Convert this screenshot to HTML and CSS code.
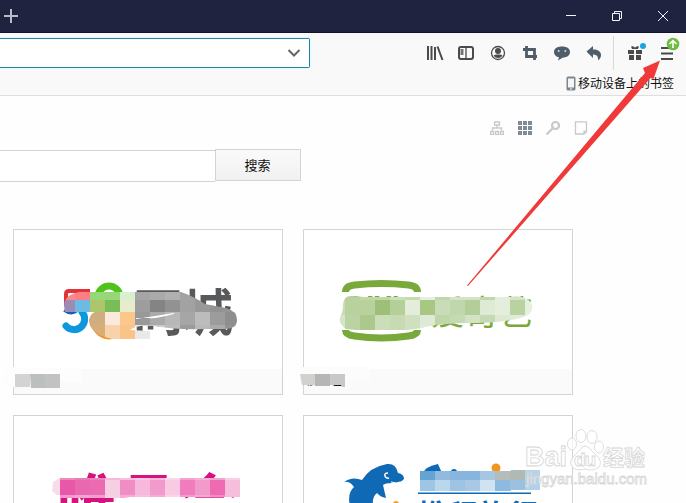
FILE: index.html
```html
<!doctype html>
<html lang="zh">

<head>
    <meta charset="utf-8">
    <title>新标签页</title>
    <link rel="stylesheet" href="styles.css">
</head>

<body>

<header class="titlebar">
    <svg class="new-tab" width="14" height="14" viewBox="0 0 14 14"><path d="M7 0v14M0 7h14"/></svg>
    <div class="window-buttons">
        <svg width="46" height="32" viewBox="0 0 46 32"><path d="M18 15.500h10"/></svg>
        <svg width="46" height="32" viewBox="0 0 46 32"><path d="M18.500 13.500h7v7h-7zM20.500 13.500v-2h7v7h-2"/></svg>
        <svg width="46" height="32" viewBox="0 0 46 32"><path d="M18 11l10 10M28 11L18 21"/></svg>
    </div>
</header>

<div class="toolbar">
    <div class="nav">
        <div class="url">
            <svg width="14" height="10" viewBox="0 0 14 10"><path d="M1.500 2L7 7.500 12.500 2"/></svg>
        </div>
        <div class="buttons">
            <!-- library -->
            <svg viewBox="0 0 32 32"><path class="line" d="M10 9v14M13.500 9v14M17 10v13M19.500 9.500l5 13.500"/></svg>
            <!-- sidebar -->
            <svg viewBox="0 0 32 32"><rect class="line" x="9" y="10" width="14" height="12" rx="2"/><path class="line thin" d="M16 10v12M10.500 13h3M10.500 15h3M10.500 17h3"/></svg>
            <!-- account -->
            <svg viewBox="0 0 32 32"><circle class="line thin" cx="16" cy="16" r="6.500"/><circle class="fill" cx="16" cy="14" r="3"/><path class="fill" d="M11.500 18.500q2-1 3-1h3q2 0 3 1-1.500 2.500-4.500 2.500t-4.500-2.500z"/></svg>
            <!-- screenshot -->
            <svg viewBox="0 0 32 32"><path class="slate-line" d="M9 12.500h11.500V23M12.500 9v10.500H23"/></svg>
            <!-- chat -->
            <svg viewBox="0 0 32 32"><path class="slate" d="M16 9.500c5 0 8 2.200 8 5.500s-3 5.500-7 5.500l-5 3 1-3.200C10 19.800 8 17.700 8 15c0-3.300 3-5.500 8-5.500z"/><circle cx="12.700" cy="14" r="1" fill="#d5dade"/><circle cx="19.300" cy="14" r="1" fill="#d5dade"/></svg>
            <!-- undo -->
            <svg viewBox="0 0 32 32"><path class="slate" d="M8.500 14.500l6.500-5.500v3.500c5 0 8 2 8 5.500 0 2-1 4-3 5.500.7-4-1.500-6-5-6V21z"/></svg>
            <i class="separator"></i>
            <!-- gift -->
            <svg viewBox="0 0 32 32"><path class="fill" d="M9 13h6v4H9zM17 13h6v4h-6zM10 18h5v5h-5zM17 18h5v5h-5zM12 9.500q3-1 4 1.200 1-2.200 4-1.200l-1 2.500h-6z"/><circle cx="24" cy="9" r="3" fill="#1ba5e0"/></svg>
            <!-- menu -->
            <svg viewBox="0 0 32 32"><path class="line" d="M10 11h12M10 16.500h12M10 22h12"/><circle cx="22" cy="7" r="6.300" fill="#6ebd43"/><path d="M22 11V4M18.500 7L22 3.600 25.500 7" fill="none" stroke="#fff" stroke-width="1.600"/></svg>
        </div>
    </div>
    <div class="bookmarks">
        <svg width="10" height="15" viewBox="0 0 10 15"><rect x=".5" y=".5" width="9" height="14" rx="1.500" fill="#7d858d"/><path d="M2 2.500h6v9H2z" fill="#f4f5f6"/><path d="M4 13h2" stroke="#fff"/></svg>
        <span>移动设备上的书签</span>
    </div>
</div>

<main>
    <div class="views">
        <svg viewBox="0 0 14 14"><path d="M4.500 1h5v3h-5zM7 4v3M2.500 9.500V7h9v2.500M.5 10.500h3v3h-3zM5.500 10.500h3v3h-3zM10.500 10.500h3v3h-3z"/></svg>
        <svg class="active" viewBox="0 0 14 14"><path d="M0 2h14M0 7h14M0 12h14"/></svg>
        <svg class="search-icon" viewBox="0 0 14 14"><circle cx="9.500" cy="4.500" r="3.500"/><path d="M7 7l-6.500 6.500"/></svg>
        <svg viewBox="0 0 14 14"><path d="M1.500.8h11v9.700l-2.500 2.500H1.500zM12.500 10.500H10V13"/></svg>
    </div>

    <form class="search">
        <input type="text">
        <button type="button">搜索</button>
    </form>

    <div class="tiles">
        <div class="tile">
            <svg class="logo" viewBox="14 230 268 139">
                <path d="M90 291H69q-3 0-3 3v12" fill="none" stroke="#e23237" stroke-width="4"/>
                <path d="M65 309q7 5 13-1" fill="none" stroke="#155ebd" stroke-width="6"/>
                <path d="M82 312a10.500 10.500 0 1 1-16 14" fill="none" stroke="#0d98dc" stroke-width="7" stroke-linecap="round"/>
                <circle cx="109" cy="297" r="11" fill="none" stroke="#4fc319" stroke-width="7"/>
                <circle cx="109" cy="322" r="14" fill="none" stroke="#f39321" stroke-width="7"/>
                <text class="name-58" x="133" y="331">同城</text>
                <clipPath id="clip-58"><path d="M64 306q0-11 15-14h102q12 4 24 12l21 4q11 3 11 12t-13 9h-21q-25 1-48-3-18-2-25 4l20 1v8h-38q-23-5-23-19 2-8 8-8H65z"/></clipPath>
                <g class="mosaic" data-mosaic="58" clip-path="url(#clip-58)"></g>
                <path d="M136 319l38-6v1q-18 5-26 4h-12z" fill="#fff"/>
            </svg>
            <div class="caption"></div>
            <svg class="cover" viewBox="0 0 84 27">
                <path d="M10 0h60q9 0 12 4v11H15v5h-3Q2 18 2 12T10 0z" fill="#fdfdfd"/>
                <path d="M15 7h15v13H15z" fill="#d5d2d2"/><path d="M30 7h15v14H31z" fill="#bbbfc0"/><path d="M45 7h15v14H45z" fill="#c2c2c2"/>
            </svg>
        </div>
        <div class="tile">
            <svg class="logo" viewBox="304 230 268 139">
                <path d="M345.500 292q0-6 9-7 27-3 54 0 9 1 9 7M345.500 330q0 5 9 6 27 4 54 0 9-1 9-6" fill="none" stroke="#79a83b" stroke-width="7"/>
                <text class="qiyi" x="344" y="317">QIYI</text>
                <text class="name-qiyi" x="431" y="325">爱奇艺</text>
                <clipPath id="clip-qiyi"><path d="M343 308q-1-12 8-12l14 1h145q15-3 22 7 2 10-9 13-17 6-59 6-30 1-42 5-35 6-76 1-10-7-4-16z"/></clipPath>
                <g class="mosaic" data-mosaic="qiyi" clip-path="url(#clip-qiyi)"></g>
            </svg>
            <div class="caption">爱奇艺</div>
            <svg class="cover" viewBox="0 0 84 27">
                <path d="M10 0h70v14H10z" fill="#fcfcfc"/>
                <path d="M10 7h15v11H12z" fill="#d1d1d0"/><path d="M25 7h15v12H25z" fill="#b6b6b5"/><path d="M40 7h15v13h-3l-1-2H40z" fill="#c6c8c9"/>
            </svg>
        </div>
        <div class="tile">
            <svg class="logo" viewBox="14 416 268 139">
                <text class="vip" x="57" y="525">唯品会</text>
                <clipPath id="clip-vip"><path d="M60 478h180v19H130l-5 1H60l-8-7 1-9z"/></clipPath>
                <g class="mosaic" data-mosaic="vip" clip-path="url(#clip-vip)"></g>
            </svg>
            <div class="caption"></div>
        </div>
        <div class="tile">
            <svg class="logo" viewBox="304 416 268 139">
                <path d="M344 482q8-6 18-2 8-13 25-16 9-1 11 9 6 1 6 6-3 4-12 4-7 0-9 2l3 13q-6-1-9-5-5 4-4 12l-23 1q-3-13 4-19-4-6-10-5z" fill="#0f69b5"/>
                <path d="M388 473q-4 0-3 3t4 2" fill="none" stroke="#fff" stroke-width="1.500"/>
                <path d="M391 482q6 2 9 0" fill="none" stroke="#fff"/>
                <circle cx="396" cy="504" r="3" fill="#f3a12b"/>
                <path d="M422 474q4-8 16-10l4 9v3h-20z" fill="#0f69b5"/>
                <circle cx="454" cy="472" r="3" fill="#0f69b5"/>
                <circle cx="496" cy="468" r="4.500" fill="#f0961e"/>
                <path d="M418 493.300h113" stroke="#0f69b5" stroke-width="1.500"/>
                <text class="ctrip" x="418" y="526">携程旅行</text>
                <clipPath id="clip-ctrip"><path d="M420 471h91v-1h29v20h-29v1h-91z"/></clipPath>
                <g class="mosaic" data-mosaic="ctrip" clip-path="url(#clip-ctrip)"></g>
            </svg>
            <div class="caption"></div>
        </div>
    </div>
</main>

<svg class="arrow" width="200" height="230" viewBox="464 58 200 230">
    <path d="M467 285.500L645 73l-2-5 17-7.500-6.500 18.500-3-1L468 286z" fill="#f03a3a"/>
</svg>

<div class="watermark">
    <svg width="135" height="68" viewBox="524 424 135 68">
        <g class="paw">
            <ellipse cx="572" cy="444" rx="4.500" ry="6"/>
            <ellipse cx="581" cy="436" rx="5" ry="6.500"/>
            <ellipse cx="592" cy="437" rx="5" ry="6.500"/>
            <ellipse cx="599" cy="447" rx="4.500" ry="6"/>
            <path d="M585 446q4 0 7 5l7 7q4 8-3 11-5 2-11 0-8 2-12-1-5-5 0-11l7-7q2-4 5-4z"/>
        </g>
        <text x="525" y="466" class="bai" textLength="42">Bai</text>
        <text x="574" y="466" class="du" textLength="22">du</text>
        <text x="603" y="465" class="jingyan">经验</text>
        <text x="526" y="484" class="site" textLength="121">jingyan.baidu.com</text>
    </svg>
</div>

<script>

    // rows of 15px cells, first value is the left edge, second the top
    let mosaics = {
        "58": [
            [60, 285, "#f7888b #fb7e84 #98d777 #98d777 #d9f0d0 #a5a5a5 #aaa #b0b0b0 #a2a2a2 #9b9b9b #999 #999"],
            [60, 300, "#9c8cb4 #6bbbe6 #adc66c #79bd59 #e9eccb #9d9d9d #858383 #929292 #a2a2a2 #999 #929292 #959595"],
            [60, 312, "#d0ad80 #d0ad80 #d0ad80 #fbeadb #fbc78b #999 #aaa #b8b8b8 #a6a6a6 #bcbcbc #9c9c9c #8e8e8e #cbcbcb"],
            [90, 325, "#d7ad78 #f7d2aa #f9c488 #e9e9e9 #ccc #bbb #9b9b9b #b8b8b8 #aaa #929292 #cbcbcb"]
        ],
        "qiyi": [
            [330, 285, "#c8dbb6 #b9d19d #c1d7a9 #c1d7a9 #cbdfb8 #c6dab2 #e6efdf #c1d7ae #d4e3c8 #d3e3c5 #c1d7ae #e5eedc #d5e4c7 #e7efdf"],
            [330, 300, "#c8dbb6 #b9d19d #b9d19d #9dbf77 #b4cf98 #e3edda #a8c783 #cadcb7 #c0d6ab #b3ce98 #dfead4 #e5eedc #b9d29f #e7efdf"],
            [330, 315, "#d6e4ca #bad3a1 #abc98d #cbddb9 #c7dab3 #cfe0bf #dfead6 #bed6a8 #c5dab3 #d4e3c8 #c5dab3 #dce8d2 #e0ebd8 #e7efdf"]
        ],
        "vip": [
            [45, 465, "#f7d5e6 #eb8abd #e87bb6 #e983b9 #f3bada #f5bfdb #f7c9e2 #f3bada #f9d6e8 #f1a3cd #f3b3d5 #f0a3cb #f8cfe4"],
            [45, 480, "#f9dcea #e857a8 #e968af #ea6bb1 #f7cfe3 #f08dc5 #f6b8dc #f19acb #f9cae4 #ef7dbd #f19acb #ee6ab2 #f6bddd"],
            [45, 495, "#fff #f19acb #f2a5d0 #f1a0ce #f7d0e4 #f4add5 #f7c2df #f3aed5 #f8d6e8 #f29bcc #f3aad2 #f08dc4 #f6bddd"]
        ],
        "ctrip": [
            [420, 465, "#65a3d3 #91bade #87b5dd #87b5dd #a6c7e1 #b5bdbb #b1b9b5 #b6d4e8 #dbe9f4"],
            [420, 480, "#9ec5e4 #bad7ed #9fc3e3 #a8c8e6 #cfe3f3 #8dbae0 #9bc1df #b2d1e9 #d6e6f2"]
        ]
    };

    for (let name in mosaics) {
        let group = document.querySelector(`[data-mosaic="${name}"]`);
        for (let [left, top, colors] of mosaics[name]) {
            colors.split(" ").forEach((color, i) => {
                let cell = document.createElementNS("http://www.w3.org/2000/svg", "rect");
                cell.setAttribute("x", left + i * 15);
                cell.setAttribute("y", top);
                cell.setAttribute("width", 15);
                cell.setAttribute("height", 15);
                cell.setAttribute("fill", color);
                group.appendChild(cell);
            });
        }
    }

</script>

</body>

</html>
```

FILE: styles.css
```css
html,
body {
    height: 100%;
    margin: 0;
    overflow: hidden;
}

body {
    position: relative;
    background: #fefefe;
    color: #111;
    font: 12px "Noto Sans CJK SC", sans-serif;
}

svg {
    display: block;
    flex: none;
}

.titlebar {
    display: flex;
    justify-content: space-between;
    box-sizing: border-box;
    height: 33px;
    padding-left: 4px;
    border-bottom: 1px solid #11142b;
    background: #202340;
}

.new-tab {
    margin-top: 9px;
    stroke: #b9bacb;
    stroke-width: 2;
}

.window-buttons {
    display: flex;
    fill: none;
    stroke: #f4f4f8;
}

.toolbar {
    box-sizing: border-box;
    height: 63px;
    border-bottom: 1px solid #dedede;
    background: #f9f9f9;
}

.nav {
    display: flex;
    justify-content: space-between;
    height: 39px;
    padding: 0 3px 0 0;
}

.url {
    display: flex;
    align-items: center;
    justify-content: flex-end;
    box-sizing: border-box;
    width: 310px;
    height: 30px;
    margin-top: 5px;
    padding-right: 8px;
    border: 1px solid #287fa8;
    border-left: 0;
    border-radius: 0 2px 2px 0;
    background: #fff;
    box-shadow: 0 0 1px 1px #e0f8fb;
}

.url svg {
    fill: none;
    stroke: #666;
    stroke-width: 2;
}

.buttons {
    display: flex;
    padding-top: 4px;
}

.buttons svg {
    width: 32px;
    height: 32px;
    overflow: visible;
}

.separator {
    width: 1px;
    height: 34px;
    margin: -1px 5px 0 3px;
    background: #d7d7d9;
}

.line {
    fill: none;
    stroke: #4a4a4d;
    stroke-width: 2;
}

.thin {
    stroke-width: 1.3;
}

.fill {
    fill: #4a4a4d;
}

.slate {
    fill: #4f5d6a;
}

.slate-line {
    fill: none;
    stroke: #4f5d6a;
    stroke-width: 2.8;
}

.bookmarks {
    display: flex;
    align-items: center;
    justify-content: flex-end;
    gap: 2px;
    height: 22px;
    padding-right: 12px;
    line-height: 22px;
}

.views {
    display: flex;
    gap: 14px;
    padding: 25px 0 0 490px;
}

.views svg {
    width: 14px;
    height: 14px;
    fill: none;
    stroke: #c6c9cc;
    stroke-width: 1.3;
}

.views .active {
    stroke: #7e8a95;
    stroke-width: 4;
    stroke-dasharray: 4 1;
}

.views .search-icon {
    stroke-width: 2.2;
}

.search {
    display: flex;
    align-items: flex-start;
    margin: 14px 0 0;
}

.search input {
    box-sizing: border-box;
    width: 215px;
    height: 32px;
    margin: 1px 0 0;
    border: 1px solid #d2d3d4;
    border-width: 1px 0;
    background: #fff;
}

.search button {
    width: 86px;
    height: 32px;
    padding: 0 1px 1px 0;
    border: 1px solid #d2d3d4;
    background: linear-gradient(#fafafa, #f1f1f1);
    color: #111;
    font: 13px "Noto Sans CJK SC", sans-serif;
}

.tiles {
    display: grid;
    grid-template-columns: 270px 270px;
    gap: 20px;
    margin: 47px 0 0 13px;
}

.tile {
    position: relative;
    box-sizing: border-box;
    height: 166px;
    border: 1px solid #d3d4d5;
    background: #fff;
}

.logo {
    width: 268px;
    height: 139px;
}

.logo text {
    font-family: "Noto Sans CJK SC", sans-serif;
    font-weight: bold;
}

.caption {
    box-sizing: border-box;
    height: 25px;
    padding-left: 3px;
    background: #fafafa;
    line-height: 22px;
}

/* pixelated caption, sticks out over the left border */
.cover {
    position: absolute;
    left: -14px;
    bottom: 0;
    width: 84px;
    height: 27px;
}

.name-58 {
    fill: #58595b;
    font-size: 50px;
}

.qiyi {
    fill: #79a83b;
    font-size: 28px;
}

.logo .name-qiyi {
    fill: #79a83b;
    font-size: 34px;
    font-weight: normal;
}

.vip {
    fill: #d5137f;
    font-size: 61px;
}

.ctrip {
    fill: #0f69b5;
    font-size: 30px;
}

.arrow {
    position: absolute;
    top: 58px;
    left: 464px;
}

.watermark {
    position: absolute;
    top: 424px;
    left: 524px;
}

.watermark svg {
    fill: #fff;
    fill-opacity: .75;
    stroke: #d6d6d6;
    stroke-width: .8;
}

.bai,
.du {
    font: bold 27px "Liberation Sans", sans-serif;
}

.du {
    font-size: 19px;
}

.jingyan {
    font: bold 21px "Noto Sans CJK SC", sans-serif;
}

.site {
    font: 15px "Liberation Sans", sans-serif;
}
```
